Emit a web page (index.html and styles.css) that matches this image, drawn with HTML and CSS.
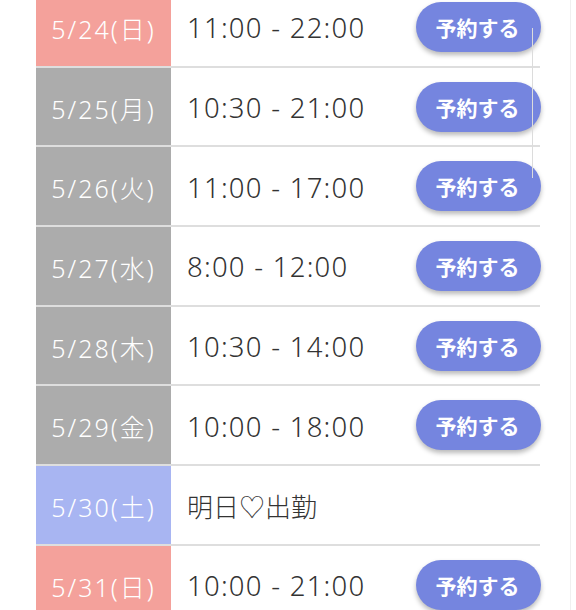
FILE: index.html
```html
<!DOCTYPE html>
<html lang="ja">
<head>
<meta charset="utf-8">
<link rel="stylesheet" href="styles.css">
</head>
<body>
<div class="page">
  <div class="schedule">
    <div class="row">
      <div class="date sun">5/24(日)</div>
      <div class="info"><span class="time">11:00 - 22:00</span><button class="reserve">予約する</button></div>
    </div>
    <div class="row">
      <div class="date">5/25(月)</div>
      <div class="info"><span class="time">10:30 - 21:00</span><button class="reserve">予約する</button></div>
    </div>
    <div class="row">
      <div class="date">5/26(火)</div>
      <div class="info"><span class="time">11:00 - 17:00</span><button class="reserve">予約する</button></div>
    </div>
    <div class="row">
      <div class="date">5/27(水)</div>
      <div class="info"><span class="time">8:00 - 12:00</span><button class="reserve">予約する</button></div>
    </div>
    <div class="row">
      <div class="date">5/28(木)</div>
      <div class="info"><span class="time">10:30 - 14:00</span><button class="reserve">予約する</button></div>
    </div>
    <div class="row">
      <div class="date">5/29(金)</div>
      <div class="info"><span class="time">10:00 - 18:00</span><button class="reserve">予約する</button></div>
    </div>
    <div class="row">
      <div class="date sat">5/30(土)</div>
      <div class="info"><span class="note">明日♡出勤</span></div>
    </div>
    <div class="row">
      <div class="date sun">5/31(日)</div>
      <div class="info"><span class="time">10:00 - 21:00</span><button class="reserve">予約する</button></div>
    </div>
  </div>
  <div class="scroll-line"></div>
  <div class="edge-line"></div>
</div>
</body>
</html>
```
FILE: styles.css
```css
html, body {
  margin: 0;
  padding: 0;
  background: #fff;
}
body {
  width: 576px;
  height: 610px;
  overflow: hidden;
  font-family: "Noto Sans", "Noto Sans CJK JP", sans-serif;
}
.page {
  position: relative;
  width: 576px;
  height: 610px;
  overflow: hidden;
}
.schedule {
  margin-top: -12px;
  margin-left: 36px;
  width: 504px;
  display: flex;
  flex-direction: column;
}
.row {
  display: flex;
  height: 77.7px;
  border-bottom: 2px solid #dedede;
}
.date {
  width: 135px;
  flex: none;
  display: flex;
  align-items: center;
  justify-content: center;
  padding-top: 2px;
  box-sizing: border-box;
  background: #acacac;
  color: #fff;
  font-family: "Noto Sans", "Noto Sans CJK JP", sans-serif;
  font-size: 25px;
  font-weight: 300;
  letter-spacing: 2px;
}
.date.sun { background: #f4a19b; }
.date.sat { background: #a8b5f2; }
.info {
  flex: 1;
  display: flex;
  align-items: center;
  justify-content: space-between;
  padding-left: 16px;
  padding-top: 2px;
}
.time {
  color: #333;
  font-family: "Noto Sans", "Noto Sans CJK JP", sans-serif;
  font-size: 27.5px;
  font-weight: 300;
  letter-spacing: 1.25px;
}
.note {
  color: #333;
  font-family: "Noto Sans CJK JP", sans-serif;
  font-size: 26px;
  font-weight: 300;
}
.reserve {
  width: 125px;
  height: 50px;
  border: none;
  border-radius: 25px;
  background: #7585df;
  color: #fff;
  font-family: "Noto Sans CJK JP", sans-serif;
  font-size: 21px;
  font-weight: 700;
  box-shadow: 0 3px 5px rgba(0, 0, 0, 0.28);
  padding: 0 2px 0 0;
  margin-top: -2px;
  margin-right: -1px;
}
.scroll-line {
  position: absolute;
  left: 532px;
  top: 28px;
  width: 1px;
  height: 150px;
  background: #dcdcdc;
}
.edge-line {
  position: absolute;
  left: 570px;
  top: 0;
  width: 1px;
  height: 610px;
  background: #f0f0f0;
}
```
